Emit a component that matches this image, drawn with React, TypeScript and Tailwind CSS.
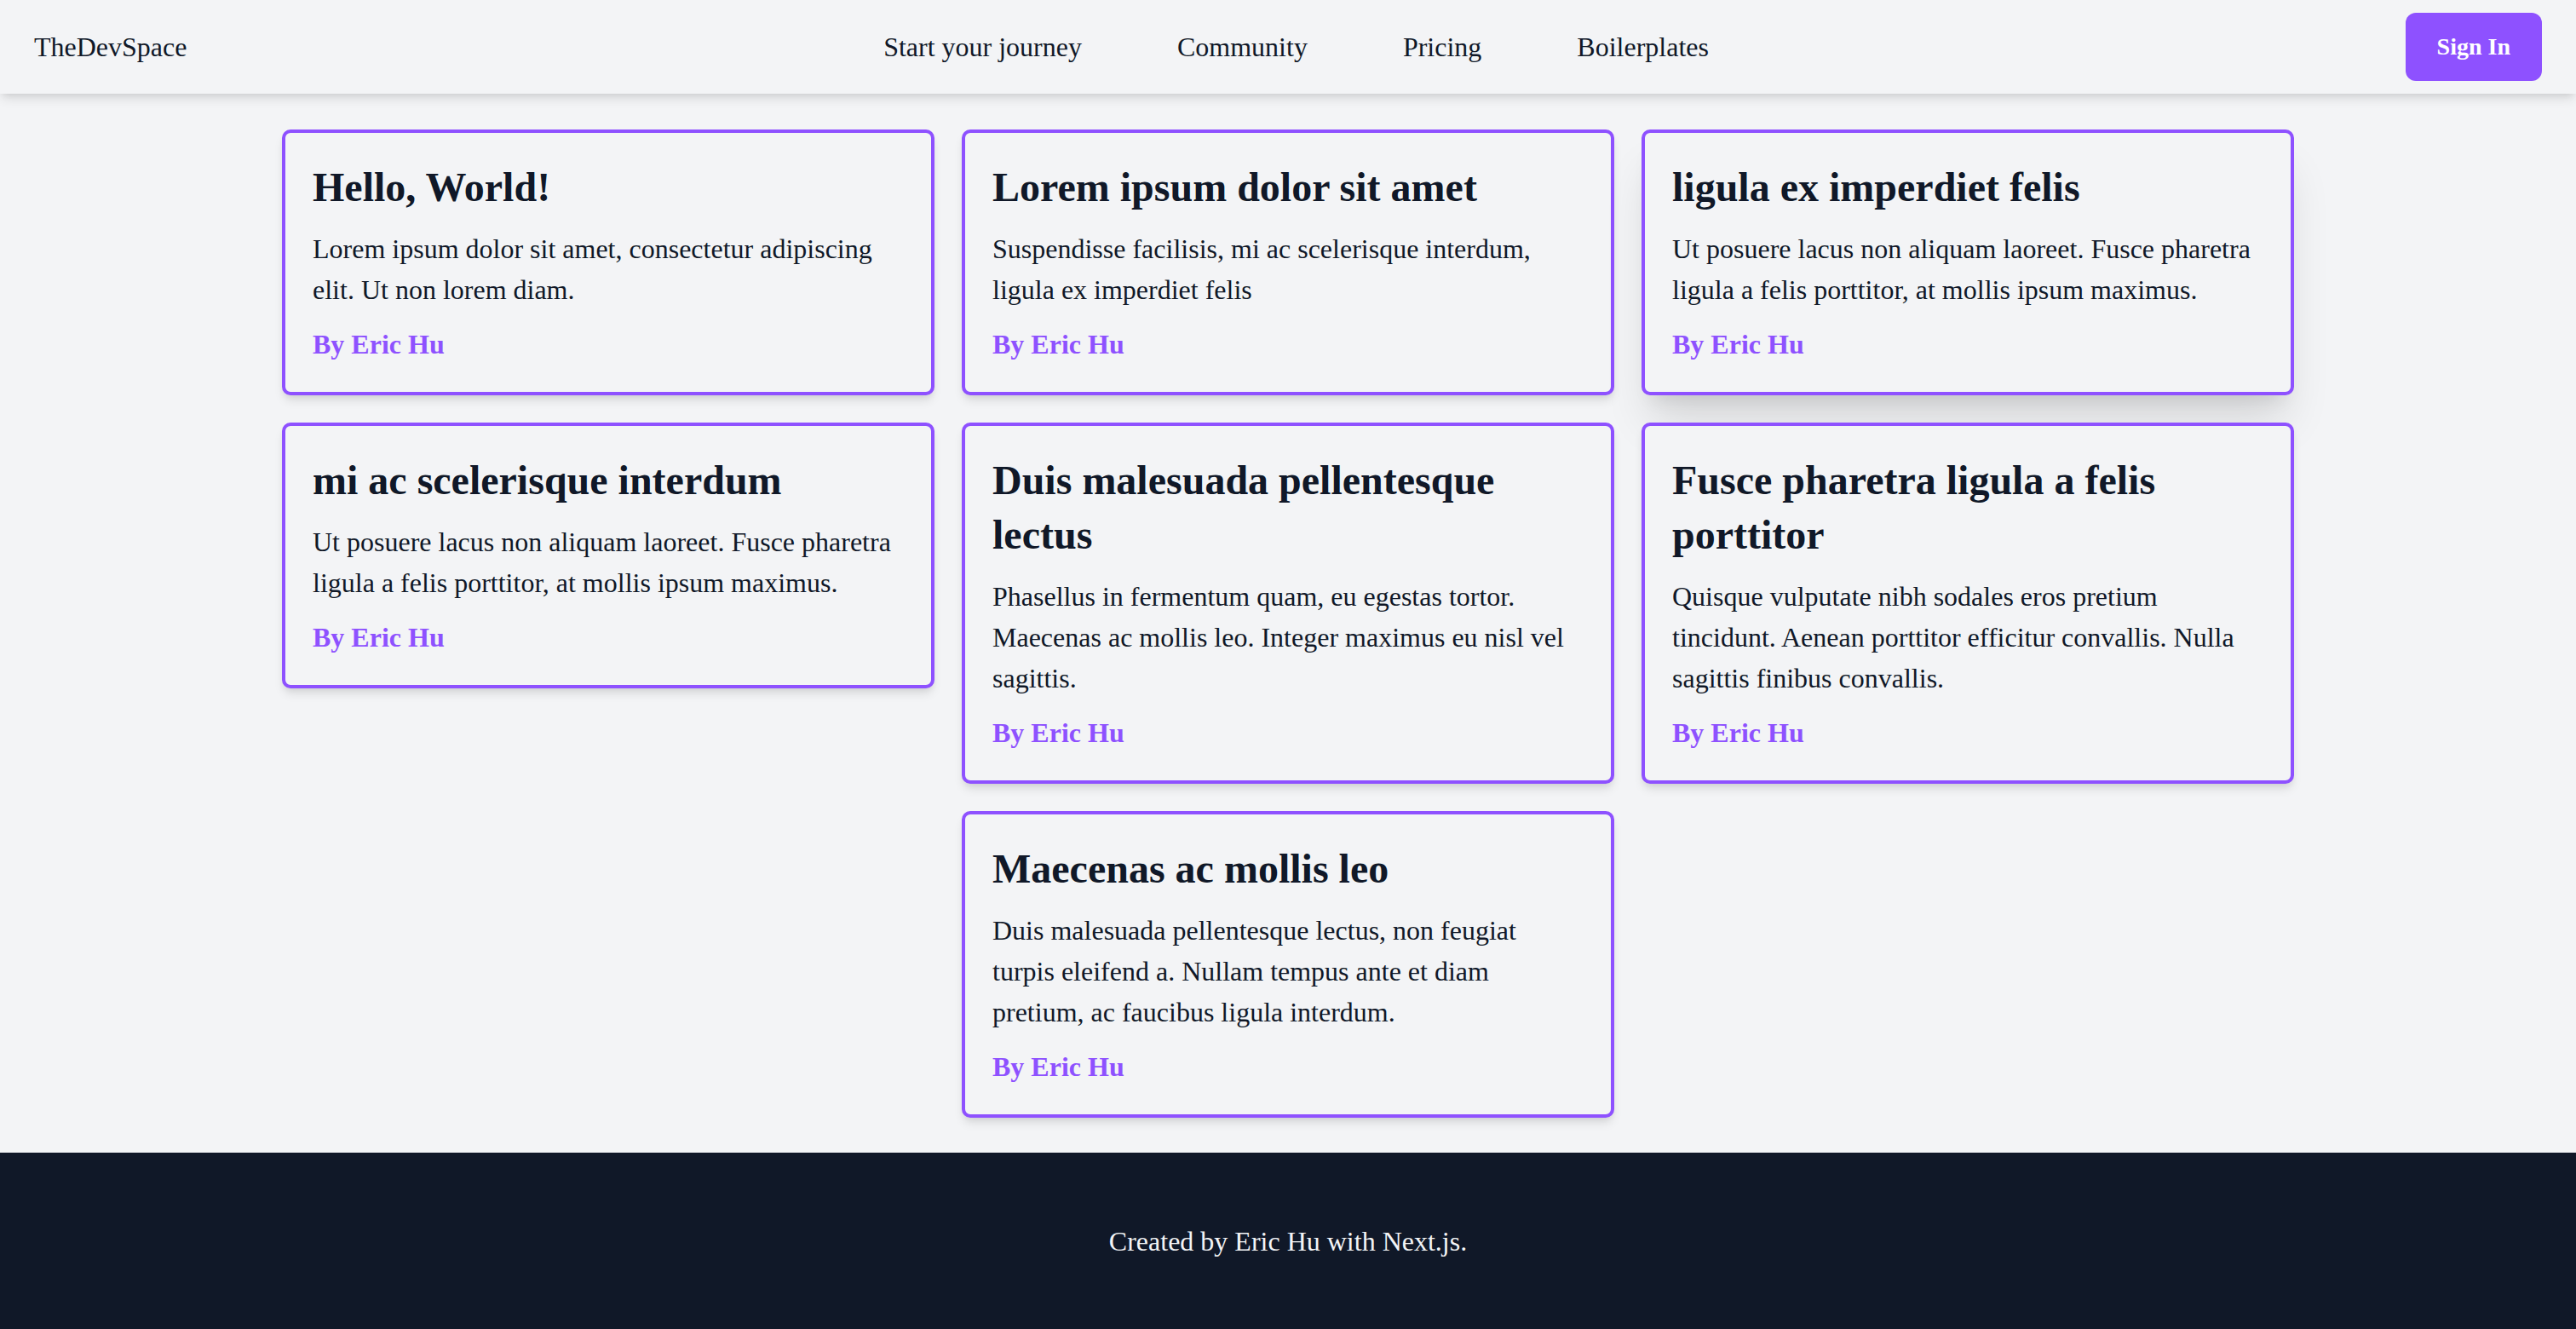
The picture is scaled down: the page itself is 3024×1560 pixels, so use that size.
const posts = [
  {
    title: "Hello, World!",
    body: "Lorem ipsum dolor sit amet, consectetur adipiscing elit. Ut non lorem diam.",
  },
  {
    title: "Lorem ipsum dolor sit amet",
    body: "Suspendisse facilisis, mi ac scelerisque interdum, ligula ex imperdiet felis",
  },
  {
    title: "ligula ex imperdiet felis",
    body: "Ut posuere lacus non aliquam laoreet. Fusce pharetra ligula a felis porttitor, at mollis ipsum maximus.",
    hover: true,
  },
  {
    title: "mi ac scelerisque interdum",
    body: "Ut posuere lacus non aliquam laoreet. Fusce pharetra ligula a felis porttitor, at mollis ipsum maximus.",
  },
  {
    title: "Duis malesuada pellentesque lectus",
    body: "Phasellus in fermentum quam, eu egestas tortor. Maecenas ac mollis leo. Integer maximus eu nisl vel sagittis.",
  },
  {
    title: "Fusce pharetra ligula a felis porttitor",
    body: "Quisque vulputate nibh sodales eros pretium tincidunt. Aenean porttitor efficitur convallis. Nulla sagittis finibus convallis.",
  },
  {
    title: "Maecenas ac mollis leo",
    body: "Duis malesuada pellentesque lectus, non feugiat turpis eleifend a. Nullam tempus ante et diam pretium, ac faucibus ligula interdum.",
  },
];

function PostCard({ title, body, hover }: { title: string; body: string; hover?: boolean }) {
  return (
    <div
      className={
        "w-[766px] rounded-[10px] border-4 border-violet-500 bg-gray-100 p-8 " +
        (hover
          ? "shadow-[0_40px_50px_-10px_rgba(0,0,0,0.12),0_16px_20px_-12px_rgba(0,0,0,0.1)]"
          : "shadow-[0_8px_12px_-2px_rgba(0,0,0,0.1),0_4px_8px_-4px_rgba(0,0,0,0.1)]")
      }
    >
      <h2 className="text-[48px] leading-[64px] font-bold text-gray-900">{title}</h2>
      <p className="mt-4 text-[32px] leading-[48px] text-gray-900">{body}</p>
      <div className="mt-4 text-[32px] leading-[48px] font-bold text-violet-500">By Eric Hu</div>
    </div>
  );
}

export default function App() {
  return (
    <div className="min-h-screen flex flex-col bg-gray-100 text-gray-900 font-['Liberation_Serif',serif]">
      <nav className="h-[110px] flex items-center justify-between px-10 bg-gray-100 shadow-[0_8px_12px_-2px_rgba(0,0,0,0.1),0_4px_8px_-4px_rgba(0,0,0,0.1)] relative z-10">
        <div className="text-[32px]">TheDevSpace</div>
        <div className="flex items-center gap-[112px] text-[32px]">
          <span>Start your journey</span>
          <span>Community</span>
          <span>Pricing</span>
          <span>Boilerplates</span>
        </div>
        <button className="rounded-xl bg-violet-500 px-[37px] py-[20px] text-[28px] leading-[40px] font-bold text-white">
          Sign In
        </button>
      </nav>

      <main className="flex-1 flex justify-center pt-[42px] pb-[41px]">
        <div className="w-[2364px] flex flex-wrap justify-center items-start gap-[32px]">
          {posts.map((p) => (
            <PostCard key={p.title} {...p} />
          ))}
        </div>
      </main>

      <footer className="h-[208px] flex items-center justify-center bg-gray-900 text-gray-100 text-[32px]">
        Created by Eric Hu with Next.js.
      </footer>
    </div>
  );
}
